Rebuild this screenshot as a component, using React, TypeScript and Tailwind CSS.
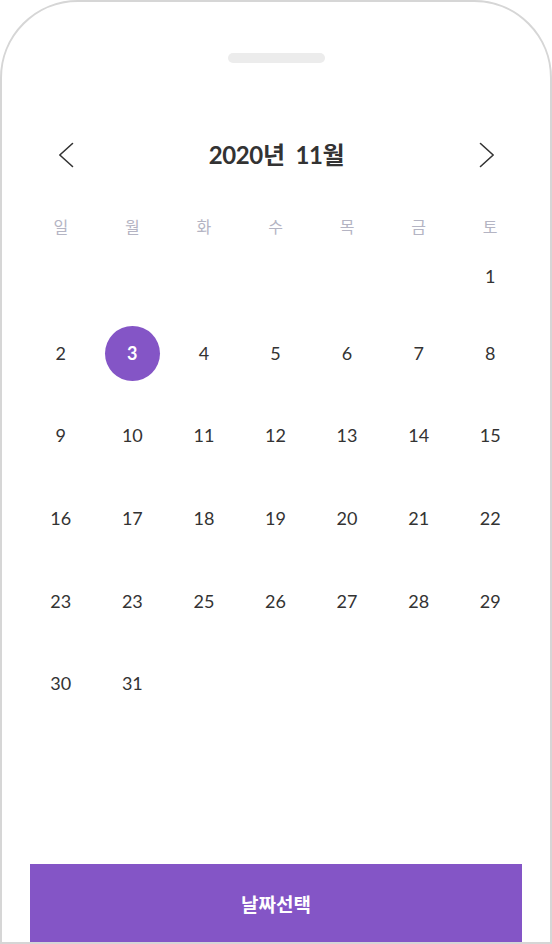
import React from "react";

const weekdays = ["일", "월", "화", "수", "목", "금", "토"];

const rows: (number | null)[][] = [
  [null, null, null, null, null, null, 1],
  [2, 3, 4, 5, 6, 7, 8],
  [9, 10, 11, 12, 13, 14, 15],
  [16, 17, 18, 19, 20, 21, 22],
  [23, 23, 25, 26, 27, 28, 29],
  [30, 31, null, null, null, null, null],
];

const latoStack = { fontFamily: "Lato, 'Noto Sans CJK KR', sans-serif" };

function DayCell({ d }: { d: number | null }) {
  if (d === null) return <div className="h-[55px]" />;
  const selected = d === 3;
  return (
    <div className="flex h-[55px] items-center justify-center">
      {selected ? (
        <div className="flex h-[55px] w-[55px] items-center justify-center rounded-full bg-[#8455c6] text-[18px] font-bold text-white">
          {d}
        </div>
      ) : (
        <span className="text-[18px] text-[#333333]">{d}</span>
      )}
    </div>
  );
}

export default function App() {
  return (
    <div className="h-[944px] w-[552px] bg-white" style={latoStack}>
      <div className="flex h-[944px] w-[552px] flex-col overflow-hidden rounded-t-[78px] border-2 border-[#d6d6d6] bg-white">
        <div className="mx-auto mt-[51px] h-[10px] w-[97px] rounded-full bg-[#ececec]" />

        <div className="mt-[72px] flex h-[40px] items-center justify-between pl-[56px] pr-[55px]">
          <svg width="16" height="26" viewBox="0 0 16 26" fill="none">
            <polyline
              points="14.5,1.5 1.8,13 14.5,24.5"
              stroke="#333"
              strokeWidth="1.6"
              strokeLinecap="round"
              strokeLinejoin="round"
            />
          </svg>
          <div className="text-[24px] font-bold tracking-[-0.4px] text-[#333333]">
            2020년&nbsp; 11월
          </div>
          <svg width="16" height="26" viewBox="0 0 16 26" fill="none">
            <polyline
              points="1.5,1.5 14.2,13 1.5,24.5"
              stroke="#333"
              strokeWidth="1.6"
              strokeLinecap="round"
              strokeLinejoin="round"
            />
          </svg>
        </div>

        <div className="ml-[23px] mt-[36px] grid w-[501px] grid-cols-7">
          {weekdays.map((w) => (
            <div
              key={w}
              className="flex h-[30px] items-center justify-center text-[16px] text-[#b4b4c3]"
              style={{ fontFamily: "'Noto Sans CJK KR', sans-serif" }}
            >
              {w}
            </div>
          ))}
        </div>

        <div className="ml-[23px] mt-[7.5px] grid w-[501px] grid-cols-7">
          {rows[0].map((d, i) => (
            <DayCell key={i} d={d} />
          ))}
        </div>

        <div className="ml-[23px] mt-[22px] grid w-[501px] grid-cols-7 gap-y-[27.7px]">
          {rows.slice(1).flat().map((d, i) => (
            <DayCell key={i} d={d} />
          ))}
        </div>

        <div className="mt-auto px-[28px]">
          <button
            className="flex h-[78px] w-full items-center justify-center bg-[#8455c6] pt-[3px] text-[19px] font-bold text-white"
            style={{ fontFamily: "'Noto Sans CJK KR', sans-serif" }}
          >
            날짜선택
          </button>
        </div>
      </div>
    </div>
  );
}
